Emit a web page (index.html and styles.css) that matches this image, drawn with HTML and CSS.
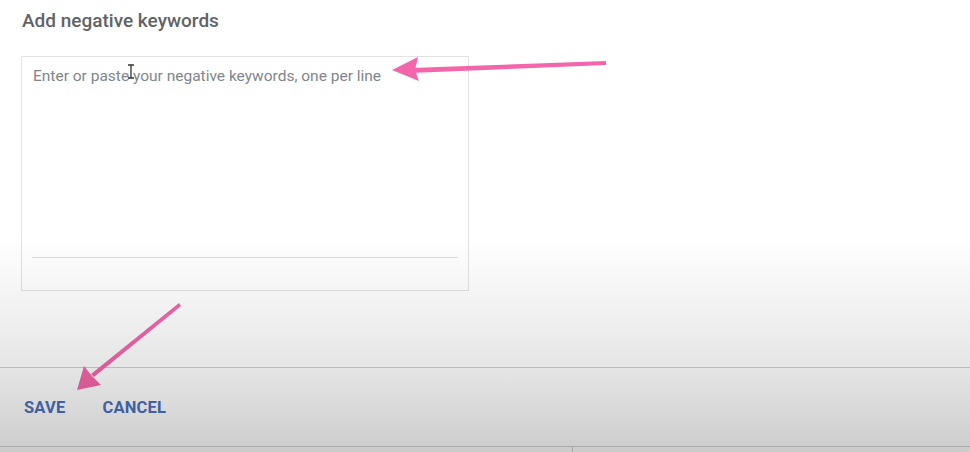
FILE: index.html
```html
<!DOCTYPE html>
<html>
<head>
  <meta charset="utf8">
  <title>Add negative keywords</title>
  <link rel="stylesheet" href="styles.css">
</head>
<body>

<div class="page">
  <div class="panel">
    <div class="content">
      <h2 class="title">Add negative keywords</h2>
      <div class="field">
        <div class="field-input">Enter or paste your negative keywords, one per line</div>
        <div class="field-line"></div>
      </div>
    </div>
    <div class="actions">
      <span class="btn">SAVE</span>
      <span class="btn">CANCEL</span>
    </div>
    <div class="below">
      <div class="below-cell"></div>
      <div class="below-cell below-right"></div>
    </div>
  </div>
  <div class="side"></div>

  <!-- text cursor -->
  <svg class="cursor" width="8" height="15" viewBox="0 0 8 15">
    <path d="M1 1h6M4 1v13M1 14h6" stroke="#333" stroke-width="1.3" fill="none"/>
  </svg>

  <!-- annotation arrows -->
  <svg class="arrows" width="970" height="452" viewBox="0 0 970 452">
    <polygon points="606,61 606,65 410,73 410,68" fill="#f466ab"/>
    <polygon points="392,70 418,57 415,70 419,81" fill="#f466ab"/>
    <polygon points="179,303 181,306 94,377 91,374" fill="#f466ab"/>
    <polygon points="77,390 84,366 92,376 101,385" fill="#f466ab"/>
  </svg>

  <div class="shade"></div>
</div>

</body>
</html>
```

FILE: styles.css
```css
body { margin: 0; padding: 0; font-family: Roboto, "Liberation Sans", sans-serif; }
.page { position: relative; display: flex; width: 970px; height: 452px; overflow: hidden; background: #fff; }
.panel { flex: 1; display: flex; flex-direction: column; }
.content { flex: 1; padding: 9px 21px 0; }
.title { margin: 0; font-size: 19px; line-height: 24px; font-weight: 500; color: #5f6368; padding-left: 1px; }
.field { box-sizing: border-box; width: 448px; height: 235px; margin-top: 23px; border: 1px solid #e2e2e2; padding: 9px 10px 0; display: flex; flex-direction: column; }
.field-input { height: 191px; font-size: 15.5px; line-height: 20px; color: #80868b; padding-left: 1px; }
.field-line { border-top: 1px solid #dcdcdc; }
.actions { height: 78px; border-top: 1px solid #cfcfcf; display: flex; align-items: center; gap: 37px; padding-left: 24px; }
.btn { font-size: 16.5px; font-weight: 700; color: #4a70c0; letter-spacing: 0.2px; }
.below { display: flex; height: 5px; border-top: 1px solid #d2d2d2; }
.below-cell { width: 572px; }
.below-right { flex: 1; border-left: 1px solid #d2d2d2; }
.side { width: 26px; background: #f1f1f5; border-left: 1px solid #ececf0; }
.cursor { position: absolute; left: 127px; top: 64px; }
.arrows { position: absolute; left: 0; top: 0; }
.shade { position: absolute; inset: 0; pointer-events: none; background: linear-gradient(to bottom, rgba(0,0,0,0) 0, rgba(0,0,0,0) 235px, rgba(0,0,0,0.04) 290px, rgba(0,0,0,0.1) 368px, rgba(0,0,0,0.2) 452px); }
```
